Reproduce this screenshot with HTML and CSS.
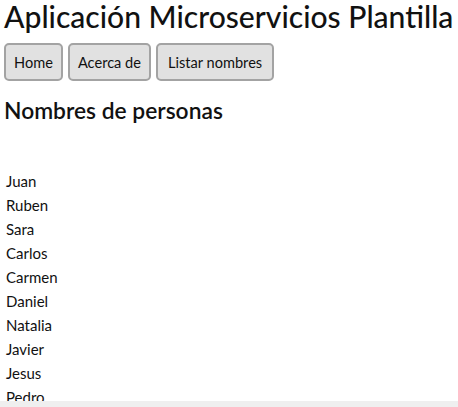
FILE: index.html
```html
<!DOCTYPE html>
<html lang="es">
<head>
<meta charset="utf-8">
<title>Aplicación Microservicios Plantilla</title>
<link rel="stylesheet" href="styles.css">
</head>
<body>
<h1 class="title">Aplicación Microservicios Plantilla</h1>
<nav class="menu">
  <button class="btn">Home</button>
  <button class="btn">Acerca de</button>
  <button class="btn btn-wide">Listar nombres</button>
</nav>
<h2 class="subtitle">Nombres de personas</h2>
<ul class="names">
  <li>Juan</li>
  <li>Ruben</li>
  <li>Sara</li>
  <li>Carlos</li>
  <li>Carmen</li>
  <li>Daniel</li>
  <li>Natalia</li>
  <li>Javier</li>
  <li>Jesus</li>
  <li>Pedro</li>
</ul>
<div class="bottom-bar"></div>
</body>
</html>
```
FILE: styles.css
```css
html, body {
  margin: 0;
  padding: 0;
  background: #ffffff;
  overflow: hidden;
}
body {
  font-family: "Lato", "Open Sans", sans-serif;
  color: #111111;
  padding: 0 0 0 4px;
}
.title {
  margin: 0;
  font-size: 30.1px;
  font-weight: 500;
  line-height: 32px;
  white-space: nowrap;
}
.menu {
  display: flex;
  gap: 5px;
  margin-top: 11px;
}
.btn {
  font-family: inherit;
  font-size: 14.6px;
  color: #111111;
  background: #e1e1e1;
  border: 2px solid #a3a3a3;
  border-radius: 5px;
  height: 38px;
  padding: 0 8px;
}
.btn-wide {
  padding: 0 10px;
}
.subtitle {
  margin: 14px 0 0;
  font-size: 22.8px;
  font-weight: 600;
  line-height: 30px;
}
.names {
  list-style: none;
  margin: 44px 0 0;
  padding: 0 0 0 2px;
  font-size: 15px;
  line-height: 24px;
}
.bottom-bar {
  position: fixed;
  left: 0;
  right: 0;
  bottom: 0;
  height: 6px;
  background: #efefef;
}
```
